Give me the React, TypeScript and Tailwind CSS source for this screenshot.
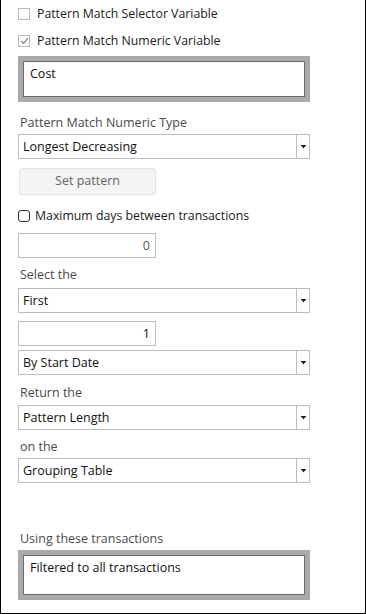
import React from 'react'

const font = { fontFamily: '"Open Sans", "Noto Sans", sans-serif' }

const Arrow: React.FC = () => (
  <svg width="5" height="4" viewBox="0 0 5 4" className="block">
    <rect x="0" y="0" width="5" height="1" fill="#222" />
    <path d="M0.5 1 L4.5 1 L2.5 3.5 Z" fill="#222" />
  </svg>
)

const Select: React.FC<{ value: string; className?: string }> = ({ value, className = '' }) => (
  <div className={`flex h-[25px] w-[292px] border border-[#bcbcbc] bg-white ${className}`}>
    <div className="flex-1 pl-[4px] text-[12.5px] leading-[23px] text-[#111]">{value}</div>
    <div className="flex w-[13px] items-center justify-center border-l border-[#bcbcbc]">
      <Arrow />
    </div>
  </div>
)

const NumberInput: React.FC<{ value: string; className?: string }> = ({ value, className = '' }) => (
  <div className={`h-[25px] w-[138px] border border-[#bcbcbc] bg-white pr-[5px] text-right text-[12.5px] leading-[23px] text-[#111] ${className}`}>
    {value}
  </div>
)

const Label: React.FC<{ text: string; className?: string }> = ({ text, className = '' }) => (
  <div className={`h-[20px] pl-[2px] text-[12.5px] leading-[20px] text-[#4a4a4a] ${className}`}>{text}</div>
)

const FrameBox: React.FC<{ text: string; className?: string }> = ({ text, className = '' }) => (
  <div className={`w-[292px] border-[5px] border-[#aaaaaa] ${className}`}>
    <div className="h-full border border-[#6b6b6b] bg-white pl-[6px] pt-[3px] text-[12.5px] leading-[18px] text-[#111]">
      {text}
    </div>
  </div>
)

export default function App() {
  return (
    <div style={font} className="h-[614px] w-[366px] border-x border-b border-black bg-white pl-[17px] pt-[4px]">
      <div className="flex h-[20px] items-center">
        <div className="h-[12px] w-[12px] border border-[#b8b8b8] bg-white" />
        <span className="ml-[7px] text-[12.3px] text-[#1a1a1a]">Pattern Match Selector Variable</span>
      </div>
      <div className="mt-[7px] flex h-[20px] items-center">
        <div className="flex h-[12px] w-[12px] items-center justify-center border border-[#b8b8b8] bg-white">
          <svg width="9" height="8" viewBox="0 0 9 8">
            <path d="M1 4 L3.5 6.5 L8 1" stroke="#8a8a8a" strokeWidth="1.2" fill="none" />
          </svg>
        </div>
        <span className="ml-[7px] text-[12.3px] text-[#1a1a1a]">Pattern Match Numeric Variable</span>
      </div>
      <FrameBox text="Cost" className="mt-[5px] h-[46px]" />

      <Label text="Pattern Match Numeric Type" className="mt-[11px]" />
      <Select value="Longest Decreasing" className="mt-[1px]" />

      <button className="ml-[1px] mt-[9px] block h-[27px] w-[137px] rounded-[3px] border border-[#e2e2e2] bg-[#f4f4f4] text-[12.5px] text-[#666]">
        Set pattern
      </button>

      <div className="mt-[11px] flex h-[20px] items-center">
        <div className="h-[12px] w-[12px] rounded-[3px] border border-[#333] bg-white" />
        <span className="ml-[5px] text-[12.3px] text-[#1a1a1a]">Maximum days between transactions</span>
      </div>
      <NumberInput value="0" className="mt-[7px] text-[#555]" />

      <Label text="Select the" className="mt-[7px]" />
      <Select value="First" className="mt-[3px]" />
      <NumberInput value="1" className="mt-[8px]" />
      <Select value="By Start Date" className="mt-[4px]" />

      <Label text="Return the" className="mt-[8px]" />
      <Select value="Pattern Length" className="mt-[2px]" />

      <Label text="on the" className="mt-[7px]" />
      <Select value="Grouping Table" className="mt-[1px]" />

      <Label text="Using these transactions" className="mt-[46px]" />
      <FrameBox text="Filtered to all transactions" className="mt-[1px] h-[50px]" />
    </div>
  )
}
